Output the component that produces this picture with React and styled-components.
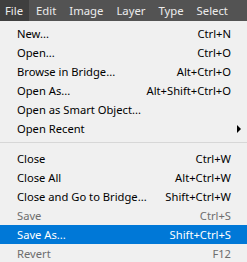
import React from 'react'
import styled, { createGlobalStyle } from 'styled-components'

const Global = createGlobalStyle`
  html, body { margin: 0; padding: 0; background: #f0f0f0; }
  body { font-family: "Segoe UI", "Noto Sans", "Open Sans", sans-serif; }
`

const Page = styled.div`
  width: 247px;
  height: 262px;
  overflow: hidden;
  display: flex;
  flex-direction: column;
  background: #f0f0f0;
`

const MenuBar = styled.div`
  display: flex;
  height: 21px;
  background: #535353;
  flex-shrink: 0;
`

const BarItem = styled.div`
  display: flex;
  align-items: center;
  padding: ${p => (p.$first ? '0 6px 0 5px' : '0 6px 0 7px')};
  background: ${p => (p.$active ? '#3f3f3f' : 'transparent')};
  color: #ececec;
  font-size: 11.3px;
`

const Menu = styled.div`
  display: flex;
  flex-direction: column;
  padding-top: 3px;
`

const Row = styled.div`
  display: flex;
  align-items: center;
  height: 19px;
  flex-shrink: 0;
  padding: 0 16px 0 17px;
  font-size: 11.2px;
  background: ${p => (p.$selected ? '#0078d7' : 'transparent')};
  color: ${p => (p.$selected ? '#ffffff' : p.$disabled ? '#6d6d6d' : '#000000')};
`

const Label = styled.span`
  flex: 1;
  white-space: nowrap;
`

const Shortcut = styled.span`
  white-space: nowrap;
`

const Arrow = styled.span`
  width: 0;
  height: 0;
  margin-right: -10px;
  border-top: 4px solid transparent;
  border-bottom: 4px solid transparent;
  border-left: 4px solid #000;
`

const Separator = styled.div`
  height: 1px;
  margin: 4px 0 6px;
  background: #d7d7d7;
  flex-shrink: 0;
`

const top = [
  { label: 'New...', key: 'Ctrl+N' },
  { label: 'Open...', key: 'Ctrl+O' },
  { label: 'Browse in Bridge...', key: 'Alt+Ctrl+O' },
  { label: 'Open As...', key: 'Alt+Shift+Ctrl+O' },
  { label: 'Open as Smart Object...' },
  { label: 'Open Recent', sub: true },
]

const bottom = [
  { label: 'Close', key: 'Ctrl+W' },
  { label: 'Close All', key: 'Alt+Ctrl+W' },
  { label: 'Close and Go to Bridge...', key: 'Shift+Ctrl+W' },
  { label: 'Save', key: 'Ctrl+S', disabled: true },
  { label: 'Save As...', key: 'Shift+Ctrl+S', selected: true },
  { label: 'Revert', key: 'F12', disabled: true },
]

const renderRow = (item) => (
  <Row key={item.label} $selected={item.selected} $disabled={item.disabled}>
    <Label>{item.label}</Label>
    {item.key && <Shortcut>{item.key}</Shortcut>}
    {item.sub && <Arrow />}
  </Row>
)

export default function App() {
  return (
    <Page>
      <Global />
      <MenuBar>
        <BarItem $first $active>File</BarItem>
        <BarItem>Edit</BarItem>
        <BarItem>Image</BarItem>
        <BarItem>Layer</BarItem>
        <BarItem>Type</BarItem>
        <BarItem>Select</BarItem>
      </MenuBar>
      <Menu>
        {top.map(renderRow)}
        <Separator />
        {bottom.map(renderRow)}
      </Menu>
    </Page>
  )
}
